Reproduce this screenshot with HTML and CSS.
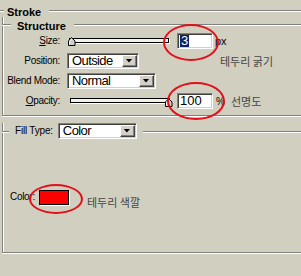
FILE: index.html
```html
<!DOCTYPE html>
<html>
<head>
<meta charset="utf-8">
<link rel="stylesheet" href="styles.css">
</head>
<body>
<div class="panel">
  <div class="head stroke-head"><span class="rule short"></span><span class="title">Stroke</span><span class="rule grow"></span></div>

  <section class="group structure">
    <div class="head"><span class="rule short"></span><span class="title">Structure</span><span class="rule grow"></span></div>
    <div class="rows">
      <div class="row">
        <span class="lbl"><u>S</u>ize:</span>
        <div class="slider size-slider">
          <div class="track"></div>
          <svg class="thumb thumb-left" width="8" height="9" viewBox="0 0 8 9"><path d="M3.5 0.5 L7 4 L7 8.5 L0.5 8.5 L0.5 4 Z" fill="#d4d0c8" stroke="#000"/><path d="M1.5 4.3 L3.5 2 M1.5 4.5 L1.5 7.5" stroke="#fff" fill="none"/></svg>
        </div>
        <div class="field-wrap size-field">
          <div class="num"><span class="sel">3</span></div>
          <span class="ring ring-size"></span>
        </div>
        <span class="unit">px</span>
      </div>
      <div class="row">
        <span class="lbl">Position:</span>
        <div class="select pos-select"><span class="val">Outside</span><span class="btn"></span></div>
        <span class="note note-size">테두리 굵기</span>
      </div>
      <div class="row">
        <span class="lbl">Blend Mode:</span>
        <div class="select blend-select"><span class="val">Normal</span><span class="btn"></span></div>
      </div>
      <div class="row">
        <span class="lbl"><u>O</u>pacity:</span>
        <div class="slider opacity-slider">
          <div class="track"></div>
          <svg class="thumb thumb-right" width="8" height="9" viewBox="0 0 8 9"><path d="M3.5 0.5 L7 4 L7 8.5 L0.5 8.5 L0.5 4 Z" fill="#d4d0c8" stroke="#000"/><path d="M1.5 4.3 L3.5 2 M1.5 4.5 L1.5 7.5" stroke="#fff" fill="none"/></svg>
        </div>
        <div class="field-wrap opacity-field">
          <div class="num">100</div>
          <span class="ring ring-opacity"></span>
        </div>
        <span class="unit pct">%</span>
        <span class="note note-opacity">선명도</span>
      </div>
    </div>
  </section>

  <section class="group fill">
    <div class="head fill-head">
      <span class="rule short"></span>
      <span class="fill-lbl">Fill Type:</span>
      <div class="select fill-select"><span class="val">Color</span><span class="btn"></span></div>
      <span class="rule grow"></span>
    </div>
    <div class="fill-body">
      <div class="row">
        <span class="color-lbl">Color:</span>
        <div class="field-wrap swatch-wrap">
          <div class="swatch"></div>
          <span class="ring ring-color"></span>
        </div>
        <span class="note note-color">테두리 색깔</span>
      </div>
    </div>
  </section>
</div>
</body>
</html>
```

FILE: styles.css
```css
* { box-sizing: border-box; }

html, body {
  margin: 0;
  background: #d1cfc0;
}

body {
  font-family: "Liberation Sans", Arial, sans-serif;
  font-size: 10px;
  color: #000;
  width: 301px;
  height: 276px;
  overflow: hidden;
}

.panel {
  padding-top: 3px;
}

/* group headers with etched rules */
.head {
  display: flex;
  align-items: flex-start;
  height: 14px;
}

.rule {
  height: 2px;
  border-top: 1px solid #808080;
  border-bottom: 1px solid #fff;
  margin-top: 7px;
}

.grow { flex: 1; }

.title {
  font-weight: bold;
  font-size: 11px;
  line-height: 14px;
  margin-top: 2px;
}

.stroke-head .short { width: 4px; }
.stroke-head .title { padding: 0 8px 0 3px; }

.group {
  margin-top: 7px;
  margin-left: 2px;
  border-left: 1px solid #808080;
  border-bottom: 1px solid #808080;
  box-shadow: inset 1px 0 0 #fff, 0 1px 0 #fff;
}

.structure .head { margin: -7px 0 0 -1px; }
.structure .short { width: 9px; }
.structure .title { padding: 0 8px 0 6px; }

.rows {
  display: flex;
  flex-direction: column;
  gap: 4px;
  padding: 2px 0 6px;
}

.row {
  display: flex;
  align-items: center;
  height: 16px;
}

.lbl {
  width: 57px;
  text-align: right;
  line-height: 16px;
  letter-spacing: -0.3px;
}

/* sliders */
.slider {
  position: relative;
  width: 100px;
  height: 16px;
}

.track {
  margin-top: 5px;
  height: 5px;
  border: 1px solid #000;
  background: #f2f1ea;
  box-shadow: 1px 1px 0 #fff;
}

.thumb {
  position: absolute;
  top: 4px;
}

.thumb-left { left: -1px; }
.thumb-right { left: 95px; top: 5px; }

.size-slider { margin-left: 9px; }
.opacity-slider { margin-left: 10px; }

/* numeric fields */
.field-wrap { position: relative; }

.size-field { margin-left: 8px; }
.opacity-field { margin-left: 7px; }

.num {
  width: 36px;
  height: 16px;
  display: flex;
  align-items: center;
  padding-left: 2px;
  background: #fff;
  border: 1px solid;
  border-color: #808080 #fff #fff #808080;
  box-shadow: inset 1px 1px 0 #404040, inset -1px -1px 0 #d4d0c8;
  font-size: 13px;
  line-height: 12px;
}

.sel {
  background: #0a246a;
  color: #fff;
  padding: 0 1px;
}

.unit {
  margin-left: 2px;
  font-size: 11px;
}

.pct {
  margin-left: 3px;
  font-size: 10px;
}

/* drop-downs */
.select {
  display: flex;
  align-items: center;
  height: 16px;
  background: #fff;
  border: 1px solid;
  border-color: #808080 #fff #fff #808080;
  box-shadow: inset 1px 1px 0 #404040, inset -1px -1px 0 #d4d0c8;
  padding-left: 4px;
  font-size: 13px;
  letter-spacing: -0.6px;
}

.val {
  flex: 1;
  line-height: 12px;
}

.btn {
  width: 15px;
  height: 12px;
  margin-right: 1px;
  background: #d4d0c8;
  border: 1px solid;
  border-color: #fff #404040 #404040 #fff;
  box-shadow: inset -1px -1px 0 #808080;
  display: flex;
  align-items: center;
  justify-content: center;
}

.btn::after {
  content: "";
  width: 7px;
  height: 4px;
  margin: 0 1px 1px 0;
  background: #000;
  clip-path: polygon(0 0, 100% 0, 50% 100%);
}

.pos-select { width: 72px; margin-left: 7px; }
.blend-select { width: 89px; margin-left: 7px; }

/* annotations */
.note {
  font-family: "Noto Sans CJK KR", sans-serif;
  font-size: 11px;
  color: #444;
  white-space: nowrap;
}

.note-size { margin-left: 81px; }
.note-opacity { margin-left: 6px; }
.note-color { margin-left: 18px; margin-top: 9px; }

.ring {
  position: absolute;
  border: 2px solid #e3101a;
  border-radius: 50%;
}

.ring-size { left: -14px; top: -9px; width: 56px; height: 37px; }
.ring-opacity { left: -10px; top: -11px; width: 58px; height: 38px; }
.ring-color { left: -10px; top: -6px; width: 54px; height: 30px; }

/* fill type group */
.fill { margin-top: 15px; }

.fill .head {
  margin: -8px 0 0 -1px;
  height: 16px;
}

.fill .rule { margin-top: 8px; }
.fill .short { width: 7px; }

.fill-lbl {
  padding: 0 5px 0 6px;
  line-height: 16px;
  letter-spacing: -0.2px;
}

.fill-select { width: 79px; }
.fill-select + .rule { margin-left: 6px; }

.fill-body {
  padding: 50px 0 47px 7px;
}

.color-lbl {
  width: 29px;
  line-height: 16px;
  letter-spacing: -0.3px;
}

.swatch {
  width: 30px;
  height: 15px;
  background: #f00;
  border: 1px solid #000;
  box-shadow: 1px 1px 0 #fff;
}
```
